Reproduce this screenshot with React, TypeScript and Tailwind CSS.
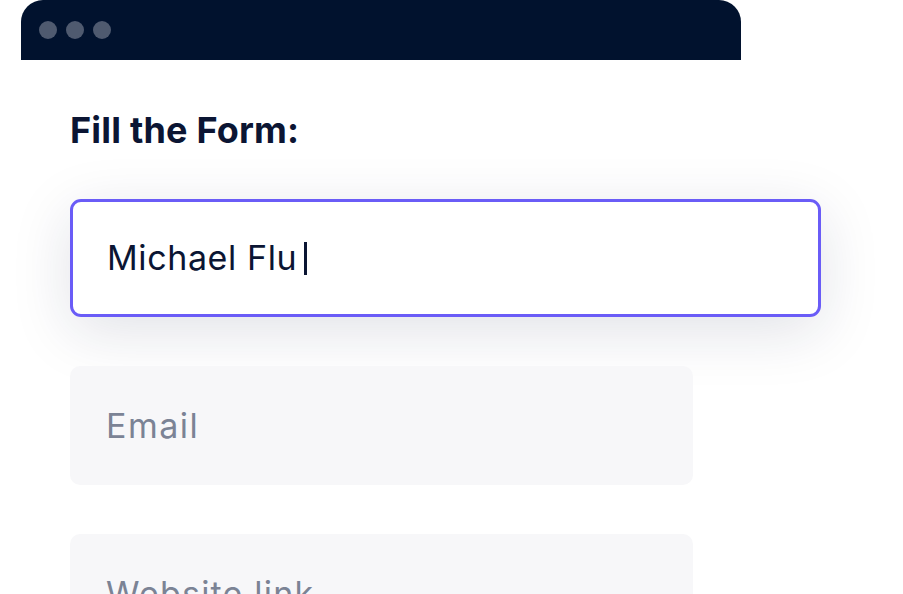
export default function App() {
  return (
    <div className="w-[903px] h-[594px] overflow-hidden bg-white" style={{ fontFamily: "Inter, 'Noto Sans', sans-serif" }}>
      <div className="ml-[21px] w-[720px] h-[60px] bg-[#01122e] rounded-t-[22px] flex items-center gap-[9px] pl-[18px]">
        <span className="w-[18px] h-[18px] rounded-full bg-[#4f5a6f]" />
        <span className="w-[18px] h-[18px] rounded-full bg-[#4f5a6f]" />
        <span className="w-[18px] h-[18px] rounded-full bg-[#4f5a6f]" />
      </div>
      <div className="pl-[70px] pt-[48px] flex flex-col">
        <h1 className="text-[36px] leading-[44px] font-bold text-[#0b1533] tracking-[0.2px]">Fill the Form:</h1>
        <div className="mt-[47px] w-[751px] h-[118px] rounded-[11px] border-[3px] border-[#6a5cf7] bg-white shadow-[0_14px_60px_rgba(20,30,70,0.13)] flex items-center pl-[34px]">
          <span className="text-[34px] leading-[40px] text-[#0b1533] tracking-[0.6px]">Michael Flu</span>
          <span className="ml-[7px] w-[2.5px] h-[33px] bg-[#0b1533]" />
        </div>
        <div className="mt-[49px] w-[623px] h-[119px] rounded-[10px] bg-[#f7f7f9] flex items-center pl-[36px]">
          <span className="text-[34px] leading-[40px] text-[#7b8395] tracking-[1.5px]">Email</span>
        </div>
        <div className="mt-[49px] w-[623px] h-[119px] rounded-[10px] bg-[#f7f7f9] flex items-center pl-[36px]">
          <span className="text-[34px] leading-[40px] text-[#7b8395] tracking-[1.2px]">Website link</span>
        </div>
      </div>
    </div>
  );
}
